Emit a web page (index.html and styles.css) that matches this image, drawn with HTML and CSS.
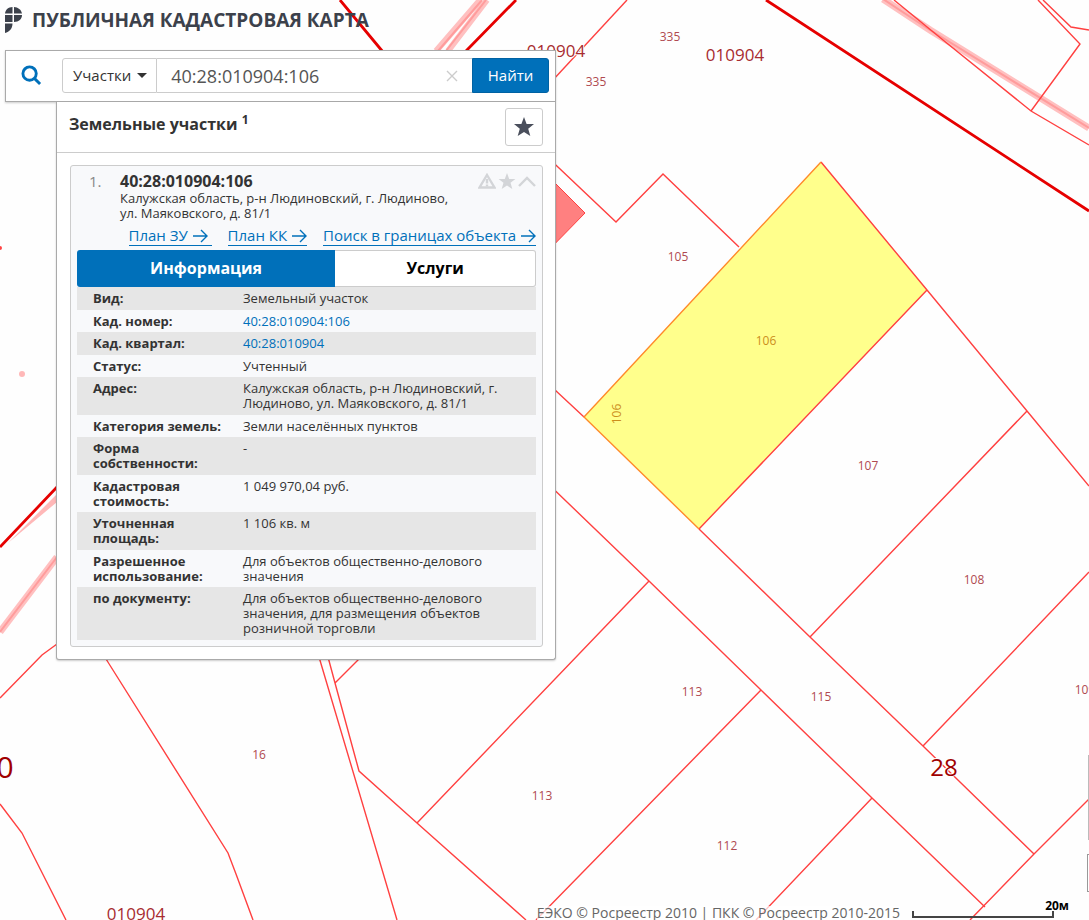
FILE: index.html
```html
<!DOCTYPE html>
<html lang="ru">
<head>
<meta charset="utf-8">
<meta name="viewport" content="width=device-width, initial-scale=1">
<title>Публичная кадастровая карта</title>
<link rel="stylesheet" href="styles.css">
</head>
<body>
<svg class="map" viewBox="0 0 1089 920" preserveAspectRatio="xMinYMin slice" role="img" aria-label="Карта участков">
  <g class="zone">
    <path class="zone-strand" d="M480 0 436 51M487 0 448 51"/>
    <path class="zone-wide" d="M883 -1 930 30 1089 128M0 632 57 557"/>
    <path class="zone-core" d="M883 -1 930 30 1089 128M0 632 57 557M482 0 438 51M486 0 446 51"/>
    <path class="zone-fill" d="M8 543 57 494V502Z"/>
    <circle class="zone-fill" cx="22" cy="374" r="3"/>
  </g>
  <polygon class="building" points="540,168 585,213 540,259"/>
  <polygon class="selected" points="821,162 927,290 699,529 584,417"/>
  <g class="plots">
    <path d="M627 0 540 94"/>
    <path d="M894 0 943 40 1031 111 1089 145M1038 0 1080 44 1031 111M1043 0 1071 27 1089 30"/>
    <path d="M540 150 616 222 663 174 739 247M821 162 927 290 1027 411 1089 486"/>
    <path d="M540 376 584 417M699 529 810 637 923 746 1034 854M540 476 649 581 761 690 872 798 985 907"/>
    <path d="M927 290 699 529M1027 411 810 637M1089 572 923 746M1089 799 1034 854 970 920"/>
    <path d="M649 581 417 823M761 690 536 920M872 798 756 920"/>
    <path d="M319 657 397 920M328 657 335 683 359 771 417 823 526 920M335 683 361 657"/>
    <path d="M106 659 228 853 236 874 253 920M0 698 42 655 57 644M0 804 22 833 66 920"/>
  </g>
  <path class="selected-edge" d="M821 162 584 417 699 529"/>
  <path class="border" d="M340 0 383 52M516 0 466 51M766 0 1089 211M0 547 57 487"/>
  <circle class="spot" cx="0" cy="248" r="2"/>
  <g class="labels">
    <text x="670" y="41">335</text>
    <text x="596" y="86">335</text>
    <text x="678" y="261">105</text>
    <text class="on-selected" x="766" y="345">106</text>
    <text class="on-selected" transform="translate(621 414) rotate(-90)">106</text>
    <text x="868" y="470">107</text>
    <text x="974" y="584">108</text>
    <text x="1085" y="694">109</text>
    <text x="692" y="696">113</text>
    <text x="542" y="800">113</text>
    <text x="821" y="701">115</text>
    <text x="727" y="850">112</text>
    <text x="259" y="759">16</text>
    <text class="block" x="556" y="57">010904</text>
    <text class="block" x="735" y="61">010904</text>
    <text class="block" x="136" y="920">010904</text>
    <text class="district" x="944" y="776">28</text>
    <text class="region" x="5" y="778">0</text>
  </g>
</svg>

<header class="brand">
  <svg class="brand-logo" viewBox="0 0 17 26" aria-hidden="true">
    <path d="M7.500 0V6.500H0C.4 2.800 3.500 0 7.500 0ZM9 0C13 .2 16.400 2.800 17 6.500H9ZM0 8H7.500V15H0ZM9 8H17C17 12 14 15 9 15ZM0 16.500H7.500C7.500 21.500 4.500 25 0 26Z"/>
  </svg>
  <h1 class="brand-name">ПУБЛИЧНАЯ КАДАСТРОВАЯ КАРТА</h1>
</header>

<main class="panel">
  <form class="search" role="search" onsubmit="return false">
    <svg class="search-icon" viewBox="0 0 22 22" aria-hidden="true"><circle cx="9" cy="9" r="7"/><path d="M14 14 20 20"/></svg>
    <div class="search-box">
      <button class="search-type" type="button">Участки<span class="caret"></span></button>
      <input class="search-input" type="text" value="40:28:010904:106" aria-label="Кадастровый номер">
      <button class="search-clear" type="reset" aria-label="Очистить"><svg viewBox="0 0 12 12"><path d="M1 1 11 11M11 1 1 11"/></svg></button>
      <button class="search-submit" type="submit">Найти</button>
    </div>
  </form>

  <section class="results">
    <div class="results-head">
      <h2 class="results-title">Земельные участки <sup>1</sup></h2>
      <button class="favorites" type="button" aria-label="Избранное">
        <svg viewBox="0 0 20 20"><path d="M10 0 12.600 7H20L14.200 11.700 16.300 19 10 14.900 3.700 19 5.800 11.700 0 7H7.400Z"/></svg>
      </button>
    </div>

    <article class="card">
      <div class="card-head">
        <span class="card-index">1.</span>
        <div class="card-text">
          <h3 class="card-title">40:28:010904:106</h3>
          <p class="card-address">Калужская область, р-н Людиновский, г. Людиново, ул. Маяковского, д. 81/1</p>
        </div>
        <div class="card-tools">
          <button type="button" aria-label="Сообщить об ошибке"><svg viewBox="0 0 18 16"><path class="line" d="M9 2 16.500 14.500H1.500Z"/><path class="line" d="M9 6V10.500M9 11.500V13.500"/></svg></button>
          <button type="button" aria-label="В избранное"><svg viewBox="0 0 20 19"><path d="M10 0 12.600 7H20L14.200 11.700 16.300 19 10 14.900 3.700 19 5.800 11.700 0 7H7.400Z"/></svg></button>
          <button type="button" aria-label="Свернуть"><svg viewBox="0 0 18 16"><path class="line" d="M1 13 9 5 17 13"/></svg></button>
        </div>
      </div>

      <nav class="links">
        <a href="#plan-zu">План ЗУ <svg viewBox="0 0 16 14" aria-hidden="true"><path d="M1 7H15M9 1 15 7 9 13"/></svg>&nbsp;</a>
        <a href="#plan-kk">План КК <svg viewBox="0 0 16 14" aria-hidden="true"><path d="M1 7H15M9 1 15 7 9 13"/></svg></a>
        <a href="#search-area">Поиск в границах объекта <svg viewBox="0 0 16 14" aria-hidden="true"><path d="M1 7H15M9 1 15 7 9 13"/></svg></a>
      </nav>

      <div class="tabs" role="tablist">
        <button class="tab tab-active" type="button" role="tab" aria-selected="true">Информация</button>
        <button class="tab" type="button" role="tab" aria-selected="false">Услуги</button>
      </div>

      <table class="info">
        <tbody>
          <tr><th scope="row">Вид:</th><td>Земельный участок</td></tr>
          <tr><th scope="row">Кад. номер:</th><td><a href="#parcel">40:28:010904:106</a></td></tr>
          <tr><th scope="row">Кад. квартал:</th><td><a href="#quarter">40:28:010904</a></td></tr>
          <tr><th scope="row">Статус:</th><td>Учтенный</td></tr>
          <tr><th scope="row">Адрес:</th><td>Калужская область, р-н Людиновский, г. Людиново, ул. Маяковского, д. 81/1</td></tr>
          <tr><th scope="row">Категория земель:</th><td>Земли населённых пунктов</td></tr>
          <tr><th scope="row">Форма собственности:</th><td>-</td></tr>
          <tr><th scope="row">Кадастровая стоимость:</th><td>1 049 970,04 руб.</td></tr>
          <tr><th scope="row">Уточненная площадь:</th><td>1 106 кв. м</td></tr>
          <tr><th scope="row">Разрешенное использование:</th><td>Для объектов общественно-делового значения</td></tr>
          <tr><th scope="row">по документу:</th><td>Для объектов общественно-делового значения, для размещения объектов розничной торговли</td></tr>
        </tbody>
      </table>
    </article>
  </section>
</main>

<div class="side-controls"><span class="zoom-edge"></span><span class="tool-edge"></span></div>
<footer class="map-footer">
  <span class="copyright">ЕЭКО © Росреестр 2010 | ПКК © Росреестр 2010-2015</span>
  <div class="scale"><span class="scale-label">20м</span><span class="scale-bar"></span></div>
</footer>
</body>
</html>
```
FILE: styles.css
```css
* { box-sizing: border-box; }

body {
  position: relative;
  min-height: 100vh;
  margin: 0;
  overflow: hidden;
  background: #fefefe;
  color: #333;
  font: 13px/15px "Open Sans", "Noto Sans", sans-serif;
}

h1, h2, h3, p { margin: 0; }
button, input { font: inherit; color: inherit; margin: 0; }
button { cursor: pointer; }
a { color: #0070ba; }

/* map */
.map { position: absolute; inset: 0; width: 100%; height: 100%; }
.map path { fill: none; }
.plots path { stroke: #ff4040; stroke-width: 1.4; }
.border { stroke: #e60000; stroke-width: 2.8; }
.zone-strand { stroke: #ffc0c0; stroke-width: 6; }
.zone-wide { stroke: #ffc0c0; stroke-width: 7; }
.zone-core { stroke: #ff9c9c; stroke-width: 2; }
.map .zone-fill { fill: #ffb8b8; }
.spot { fill: #f44; }
.building { fill: #ff8080; stroke: #ff4040; }
.selected { fill: #ffff8c; }
.selected-edge { stroke: #ff8a2a; stroke-width: 1.4; }
.labels text {
  fill: #b04a50;
  font-size: 12px;
  text-anchor: middle;
  paint-order: stroke;
  stroke: #fefefe;
  stroke-width: 2;
}
.labels .on-selected { fill: #cc8e1c; stroke: none; }
.labels .block { fill: #a82c30; font-size: 17px; }
.labels .district { fill: #a00000; font-size: 24px; }
.labels .region { fill: #a00000; font-size: 30px; }

/* header */
.brand {
  position: relative;
  display: flex;
  align-items: center;
  gap: 10px;
  height: 40px;
  padding-left: 5px;
}
.brand-logo { width: 17px; height: 26px; fill: #3c414b; }
.brand-name { color: #3c414b; font-size: 19px; line-height: 26px; }

/* panel */
.panel { position: relative; max-width: 556px; padding: 10px 0 0 5px; }
.search {
  display: flex;
  align-items: center;
  gap: 20px;
  height: 52px;
  padding: 0 6px 1px 15px;
  background: #fff;
  border: 1px solid #aaa;
  box-shadow: 0 1px 2px rgba(0, 0, 0, .2);
}
.search-icon { flex: none; width: 21px; height: 21px; fill: none; stroke: #0070ba; stroke-width: 3; }
.search-box { display: flex; flex: 1; height: 35px; min-width: 0; }
.search-type {
  display: flex;
  align-items: center;
  gap: 6px;
  padding: 0 9px 0 10px;
  background: #fff;
  border: 1px solid #ccc;
  border-radius: 3px 0 0 3px;
  font-size: 15px;
}
.caret { border: 5px solid transparent; border-top-color: #333; border-bottom: 0; }
.search-input {
  flex: 1;
  min-width: 0;
  padding: 0 14px;
  background: #fff;
  border: solid #ccc;
  border-width: 1px 0;
  color: #555;
  font-size: 18px;
  outline: 0;
}
.search-clear {
  display: flex;
  align-items: center;
  padding: 0 14px;
  background: #fff;
  border: solid #ccc;
  border-width: 1px 0;
}
.search-clear svg { width: 12px; height: 12px; stroke: #ccc; stroke-width: 1.4; }
.search-submit {
  width: 77px;
  padding: 0;
  background: #0070ba;
  border: 1px solid #0062a3;
  border-radius: 0 3px 3px 0;
  color: #fff;
  font-size: 15px;
}

.results {
  margin-left: 51px;
  background: #fff;
  border: 1px solid #aaa;
  border-top: 0;
  border-radius: 0 0 3px 3px;
  box-shadow: 0 1px 2px rgba(0, 0, 0, .2);
}
.results-head {
  display: flex;
  align-items: center;
  justify-content: space-between;
  height: 51px;
  padding: 0 12px;
  border-bottom: 1px solid #ccc;
}
.results-title { padding-bottom: 6px; font-size: 16px; line-height: 24px; }
.results-title sup { font-size: 12px; line-height: 12px; }
.favorites {
  display: flex;
  align-items: center;
  justify-content: center;
  width: 38px;
  height: 38px;
  padding: 0;
  background: #fff;
  border: 1px solid #ccc;
  border-radius: 3px;
}
.favorites svg { width: 20px; height: 20px; fill: #4a4f5c; }

.card {
  margin: 12px 12px 12px 13px;
  padding: 6px;
  background: #f8f9fb;
  border: 1px solid #ccc;
  border-radius: 3px;
}
.card-head { display: flex; align-items: flex-start; padding-left: 12px; }
.card-index { flex: none; width: 31px; color: #888; font-size: 15px; line-height: 19px; }
.card-text { flex: 1; }
.card-title { font-size: 16px; line-height: 19px; }
.card-address { max-width: 340px; }
.card-tools { display: flex; gap: 2px; margin-left: -80px; padding-top: 1px; }
.card-tools button { display: flex; padding: 0; background: none; border: 0; }
.card-tools svg { width: 18px; height: 16px; fill: #d3d5d8; }
.card-tools .line { fill: none; stroke: #d3d5d8; stroke-width: 2.4; }

.links { display: flex; justify-content: flex-end; gap: 16px; padding: 4px 0; }
.links a { font-size: 15px; line-height: 20px; white-space: nowrap; text-decoration: none; border-bottom: 1px solid; }
.links svg { width: 16px; height: 14px; fill: none; stroke: currentColor; stroke-width: 1.4; vertical-align: -2px; }

.tabs { display: grid; grid-template-columns: 9fr 7fr; }
.tab {
  height: 37px;
  padding: 0;
  background: #fff;
  border: 1px solid #ccc;
  border-left: 0;
  border-radius: 0 3px 3px 0;
  color: #000;
  font-size: 16px;
  font-weight: 700;
}
.tab-active { background: #0070ba; border: 0; border-radius: 3px 0 0 3px; color: #fff; }

.info { width: 100%; border-collapse: collapse; table-layout: fixed; }
.info th, .info td { padding: 4px 0 3px; text-align: left; vertical-align: top; }
.info th { width: 166px; padding-left: 16px; padding-right: 16px; }
.info td { padding-right: 30px; }
.info tr:nth-child(odd) { background: #e6e6e6; }
.info tr:nth-child(odd) > * { padding-bottom: 4px; }
.info a { text-decoration: none; }

/* lower map controls */
.side-controls {
  position: absolute;
  right: 0;
  bottom: 28px;
  display: flex;
  flex-direction: column;
  align-items: flex-end;
  gap: 14px;
}
.zoom-edge { width: 1px; height: 85px; background: #bbb; }
.tool-edge { width: 2px; height: 38px; background: #fff; border: 1px solid #999; border-right: 0; }
.map-footer {
  position: absolute;
  right: 20px;
  bottom: 0;
  display: flex;
  align-items: flex-end;
  gap: 12px;
}
.copyright { background: rgba(255, 255, 255, .7); color: #666; font-size: 14px; line-height: 14px; white-space: nowrap; }
.scale { display: flex; flex-direction: column; width: 157px; padding-bottom: 2px; }
.scale-label { align-self: flex-end; color: #000; font-size: 12px; font-weight: 700; line-height: 14px; }
.scale-bar { width: 142px; height: 7px; border: solid #444; border-width: 0 2px 2px; margin-top: -2px; }
```
